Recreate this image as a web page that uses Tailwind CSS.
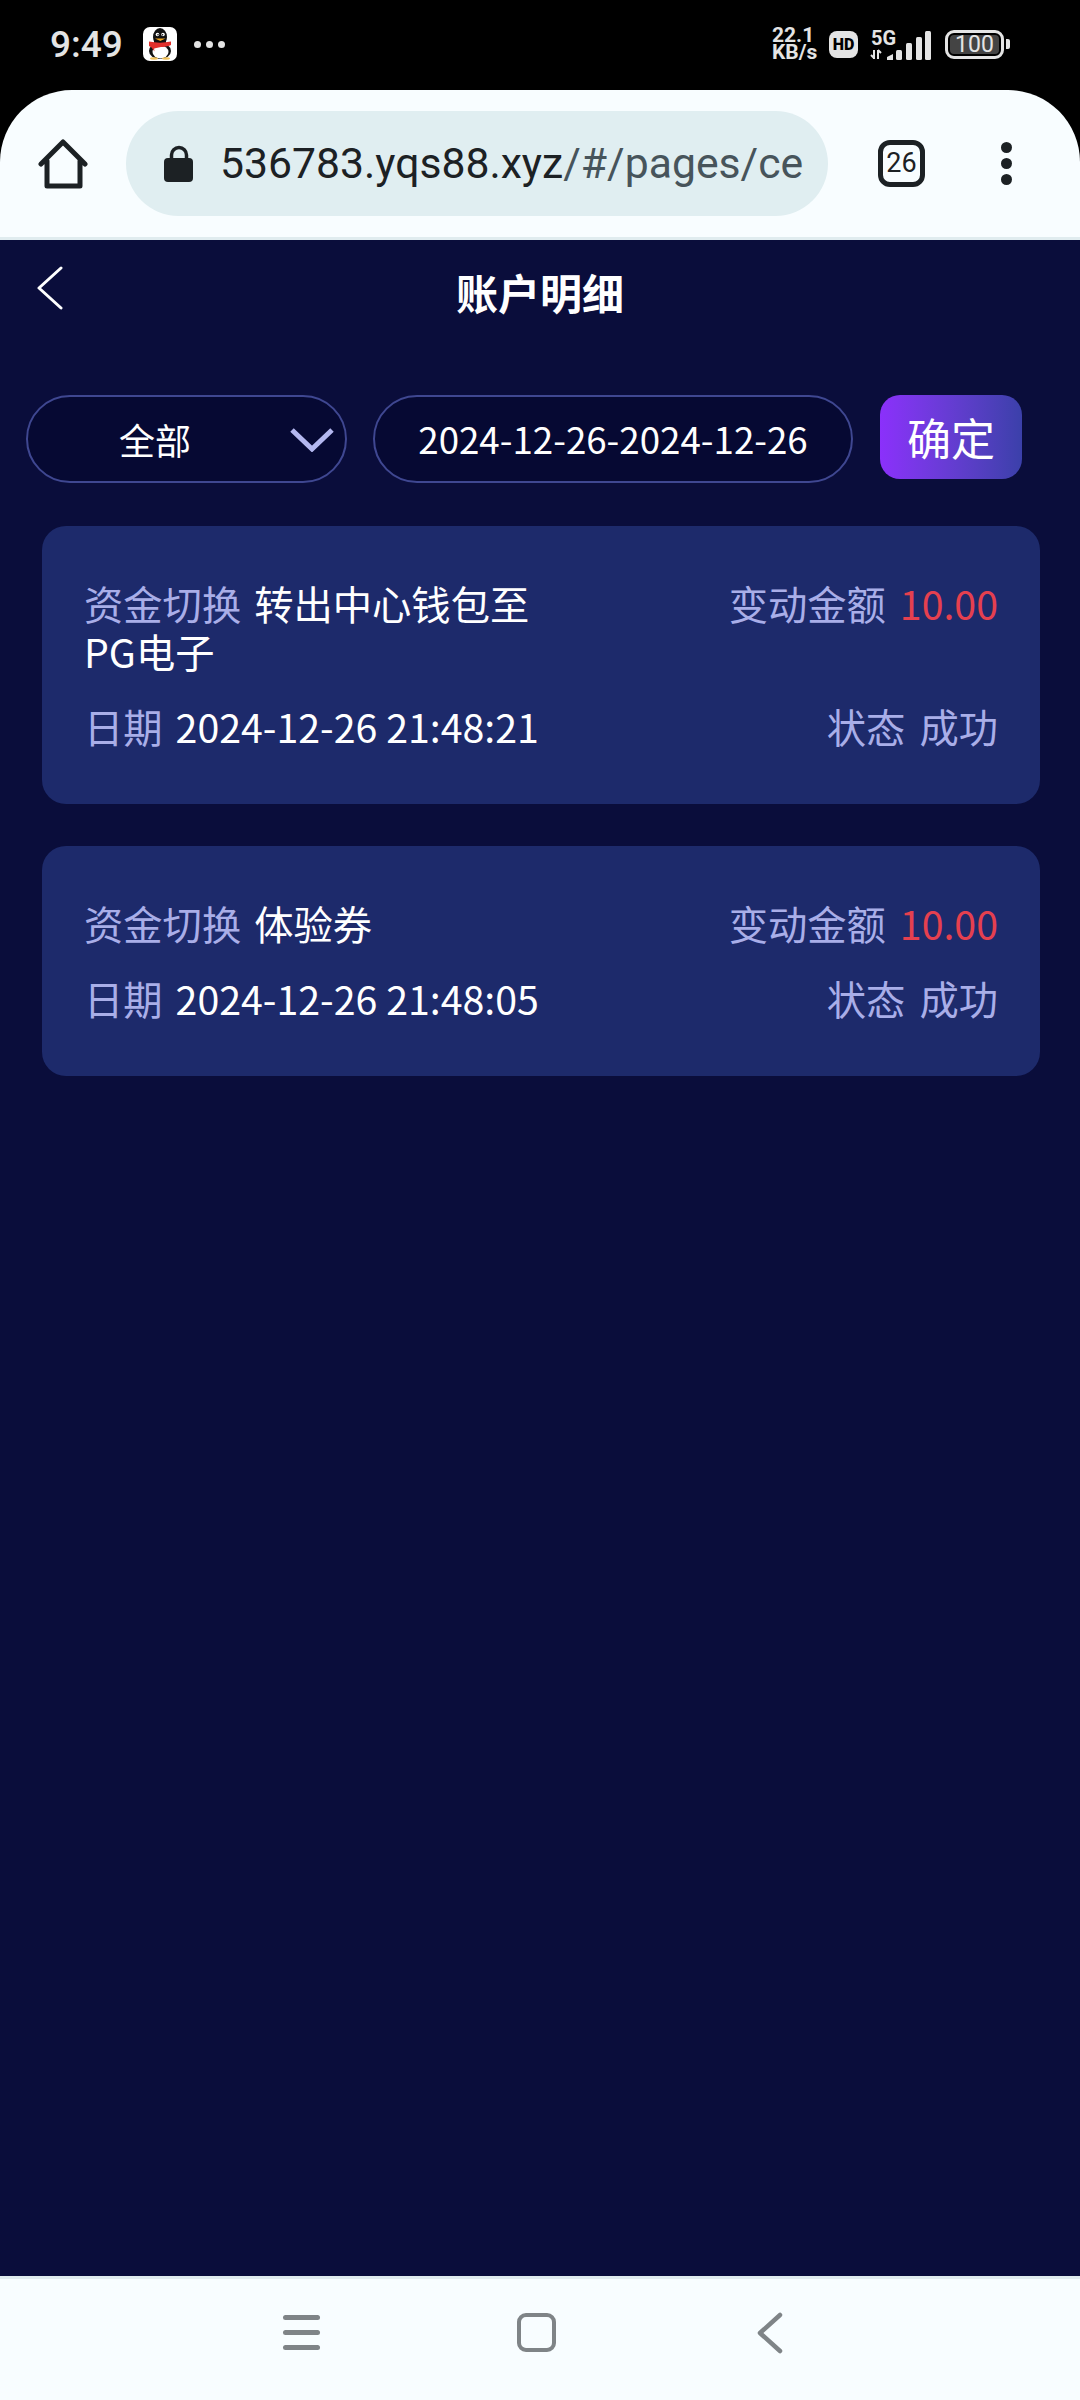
<!DOCTYPE html>
<html lang="zh-CN">
<head>
    <meta charset="UTF-8">
    <meta name="viewport" content="width=device-width, initial-scale=1.0">
    <title>账户明细</title>
    <script src="https://cdn.jsdelivr.net/npm/@tailwindcss/browser@4"></script>
</head>
<body class="bg-black">
<div class="w-[1080px] h-[2400px] flex flex-col bg-black overflow-hidden font-['Noto_Sans_CJK_SC',sans-serif]">

    <!-- status bar -->
    <div class="h-[90px] shrink-0 flex items-center justify-between pl-[50px] pr-[70px] pb-[2px] text-[#e4e4e4] font-['Roboto',sans-serif]">
        <div class="flex items-center">
            <span class="text-[37px] font-medium leading-none w-[93px]">9:49</span>
            <svg class="w-[34px] h-[34px]" viewBox="0 0 34 34">
                <rect width="34" height="34" rx="7" fill="#fff"/>
                <ellipse cx="17" cy="24" rx="11" ry="8" fill="#111"/>
                <ellipse cx="17" cy="10" rx="7" ry="9" fill="#111"/>
                <rect x="11" y="10" width="12" height="10" fill="#111"/>
                <ellipse cx="17.500" cy="25" rx="8" ry="6.500" fill="#fff"/>
                <circle cx="14.500" cy="7.500" r="1.800" fill="#fff"/>
                <circle cx="20" cy="7.500" r="1.800" fill="#fff"/>
                <circle cx="15" cy="7.800" r=".8" fill="#111"/>
                <circle cx="19.500" cy="7.800" r=".8" fill="#111"/>
                <path d="M12 11.500h10.500l-5.200 2.500z" fill="#f2a51e"/>
                <path d="M6 14.500c7 1.500 15 1.500 22 0v3.500c-3 1.500-7 2-10 2l-7 1.500 .5 3-3-4-2.500-1.500z" fill="#e2302c"/>
                <ellipse cx="11" cy="31.500" rx="4" ry="1.200" fill="#f2c25a"/>
                <ellipse cx="23" cy="31.500" rx="4" ry="1.200" fill="#f2c25a"/>
            </svg>
            <div class="flex gap-[5px] ml-[17px]">
                <span class="w-[7px] h-[7px] rounded-full bg-[#e4e4e4]"></span>
                <span class="w-[7px] h-[7px] rounded-full bg-[#e4e4e4]"></span>
                <span class="w-[7px] h-[7px] rounded-full bg-[#e4e4e4]"></span>
            </div>
        </div>
        <div class="flex items-center">
            <div class="flex flex-col text-[21px] font-bold leading-[17px] w-[57px]">
                <span>22.1</span>
                <span class="whitespace-nowrap">KB/s</span>
            </div>
            <span class="w-[29px] h-[27px] rounded-[8px] bg-[#e4e4e4] text-black text-[16px] font-black leading-[27px] text-center">HD</span>
            <svg class="ml-[12px] w-[61px] h-[36px]" viewBox="0 -4 61 36">
                <text x="1" y="15" font-size="20" font-weight="700" font-family="Roboto" fill="#e4e4e4">5G</text>
                <path d="M4 20v9M1 25l3 3M8 20v9M8 20l3 3" stroke="#e4e4e4" stroke-width="2" fill="none"/>
                <path d="M17 27l6-3v6h-6z" fill="#e4e4e4"/>
                <rect x="26" y="20" width="6" height="10" rx="1.500" fill="#e4e4e4"/>
                <rect x="36" y="13" width="6" height="17" rx="1.500" fill="#e4e4e4"/>
                <rect x="46" y="7" width="6" height="23" rx="1.500" fill="#e4e4e4"/>
                <rect x="55" y="1" width="6" height="29" rx="1.500" fill="#e4e4e4"/>
            </svg>
            <div class="ml-[14px] w-[59px] h-[29px] border-[3px] border-[#e4e4e4] rounded-[9px] p-[2px] flex">
                <span class="flex-1 rounded-[4px] bg-[#444] text-[23px] leading-[19px] text-center font-normal">100</span>
            </div>
            <span class="ml-[2px] w-[4px] h-[10px] rounded-r-[2px] bg-[#e4e4e4]"></span>
        </div>
    </div>

    <!-- browser toolbar -->
    <div class="h-[150px] shrink-0 flex items-center bg-[#f8fdff] rounded-t-[72px] border-b-[3px] border-[#e0ecef]">
        <svg class="ml-[38px] w-[50px] h-[50px]" viewBox="0 0 50 50" fill="none" stroke="#1c2124" stroke-width="5" stroke-linecap="round" stroke-linejoin="round">
            <path d="M3 25 25 3l22 22M9 22v25h33V22"/>
        </svg>
        <div class="ml-[38px] w-[702px] h-[105px] rounded-full bg-[#e0eef1] flex items-center pl-[38px]">
            <svg class="w-[30px] h-[38px] shrink-0" viewBox="0 0 30 38">
                <path d="M7.500 15V10a7.500 7.500 0 0 1 15 0v5" fill="none" stroke="#1c2124" stroke-width="3.500"/>
                <rect y="13" width="29" height="24" rx="4" fill="#1c2124"/>
            </svg>
            <span class="ml-[26px] text-[42.700px] leading-none whitespace-nowrap text-[#1c2124] font-['Roboto',sans-serif]">536783.yqs88.xyz<span class="text-[#47545b]">/#/pages/ce</span></span>
        </div>
        <div class="ml-[50px] w-[47px] h-[47px] border-[5px] border-[#1c2124] rounded-[12px] flex items-center justify-center text-[27px] text-[#1c2124] font-['Roboto',sans-serif]">26</div>
        <div class="ml-[76px] flex flex-col gap-[5px]">
            <span class="w-[11px] h-[11px] rounded-full bg-[#1c2124]"></span>
            <span class="w-[11px] h-[11px] rounded-full bg-[#1c2124]"></span>
            <span class="w-[11px] h-[11px] rounded-full bg-[#1c2124]"></span>
        </div>
    </div>

    <!-- page -->
    <div class="flex-1 bg-[#0a0d3b]">
        <div class="h-[96px] flex items-center justify-center relative">
            <svg class="absolute left-[36px] top-[26px] w-[28px] h-[44px]" viewBox="0 0 28 44" fill="none" stroke="#fff" stroke-width="3" stroke-linecap="round" stroke-linejoin="round">
                <path d="M25 2 3 22l22 20"/>
            </svg>
            <h1 class="text-[42px] font-bold text-white leading-none pt-[8px]">账户明细</h1>
        </div>

        <div class="flex items-start pl-[26px] pt-[59px]">
            <div class="w-[321px] h-[88px] rounded-full border-2 border-[#3f4791] bg-[#060933] flex items-center text-white text-[36px] pl-[91px] relative">
                全部
                <svg class="absolute right-[11px] top-[30px] w-[44px] h-[25px]" viewBox="0 0 44 25" fill="none" stroke="#b4b8f0" stroke-width="5">
                    <path d="M2 3l20 19L42 3"/>
                </svg>
            </div>
            <div class="ml-[26px] w-[480px] h-[88px] rounded-full border-2 border-[#3f4791] bg-[#060933] flex items-center justify-center text-white text-[36.700px]">2024-12-26-2024-12-26</div>
            <button class="ml-[27px] w-[142px] h-[84px] rounded-[20px] bg-gradient-to-r from-[#8b30fb] to-[#3b40aa] text-white text-[44px]">确定</button>
        </div>

        <div class="pl-[42px] pr-[40px] pt-[43px] flex flex-col gap-[42px] text-[39.300px] leading-[48px] text-[#a9aee8]">
            <div class="rounded-[24px] bg-[#1d2a6b] pl-[42px] pr-[42px] pt-[53px] pb-[54px]">
                <div class="flex justify-between">
                    <div class="w-[460px]">资金切换<span class="ml-[13px] text-white">转出中心钱包至</span> <span class="text-white">PG电子</span></div>
                    <div>变动金额<span class="ml-[14px] text-[#e5404f]">10.00</span></div>
                </div>
                <div class="flex justify-between mt-[27px]">
                    <div>日期<span class="ml-[13px] text-white">2024-12-26 21:48:21</span></div>
                    <div>状态<span class="ml-[14px]">成功</span></div>
                </div>
            </div>
            <div class="rounded-[24px] bg-[#1d2a6b] pl-[42px] pr-[42px] pt-[53px] pb-[54px]">
                <div class="flex justify-between">
                    <div>资金切换<span class="ml-[13px] text-white">体验券</span></div>
                    <div>变动金额<span class="ml-[14px] text-[#e5404f]">10.00</span></div>
                </div>
                <div class="flex justify-between mt-[27px]">
                    <div>日期<span class="ml-[13px] text-white">2024-12-26 21:48:05</span></div>
                    <div>状态<span class="ml-[14px]">成功</span></div>
                </div>
            </div>
        </div>
    </div>

    <!-- android nav bar -->
    <div class="h-[124px] shrink-0 bg-[#f8fdff] border-t-[3px] border-[#e0ecef] flex items-center pb-[14px]">
        <div class="ml-[283px] w-[37px] flex flex-col gap-[10px]">
            <span class="h-[5px] rounded-full bg-[#7f8487]"></span>
            <span class="h-[5px] rounded-full bg-[#7f8487]"></span>
            <span class="h-[5px] rounded-full bg-[#7f8487]"></span>
        </div>
        <div class="ml-[197px] w-[39px] h-[39px] rounded-[9px] border-[4px] border-[#7f8487]"></div>
        <svg class="ml-[201px] w-[26px] h-[42px]" viewBox="0 0 26 42" fill="none" stroke="#7f8487" stroke-width="4.500" stroke-linecap="round" stroke-linejoin="round">
            <path d="M23 3 3 21l20 18"/>
        </svg>
    </div>
</div>
</body>
</html>
